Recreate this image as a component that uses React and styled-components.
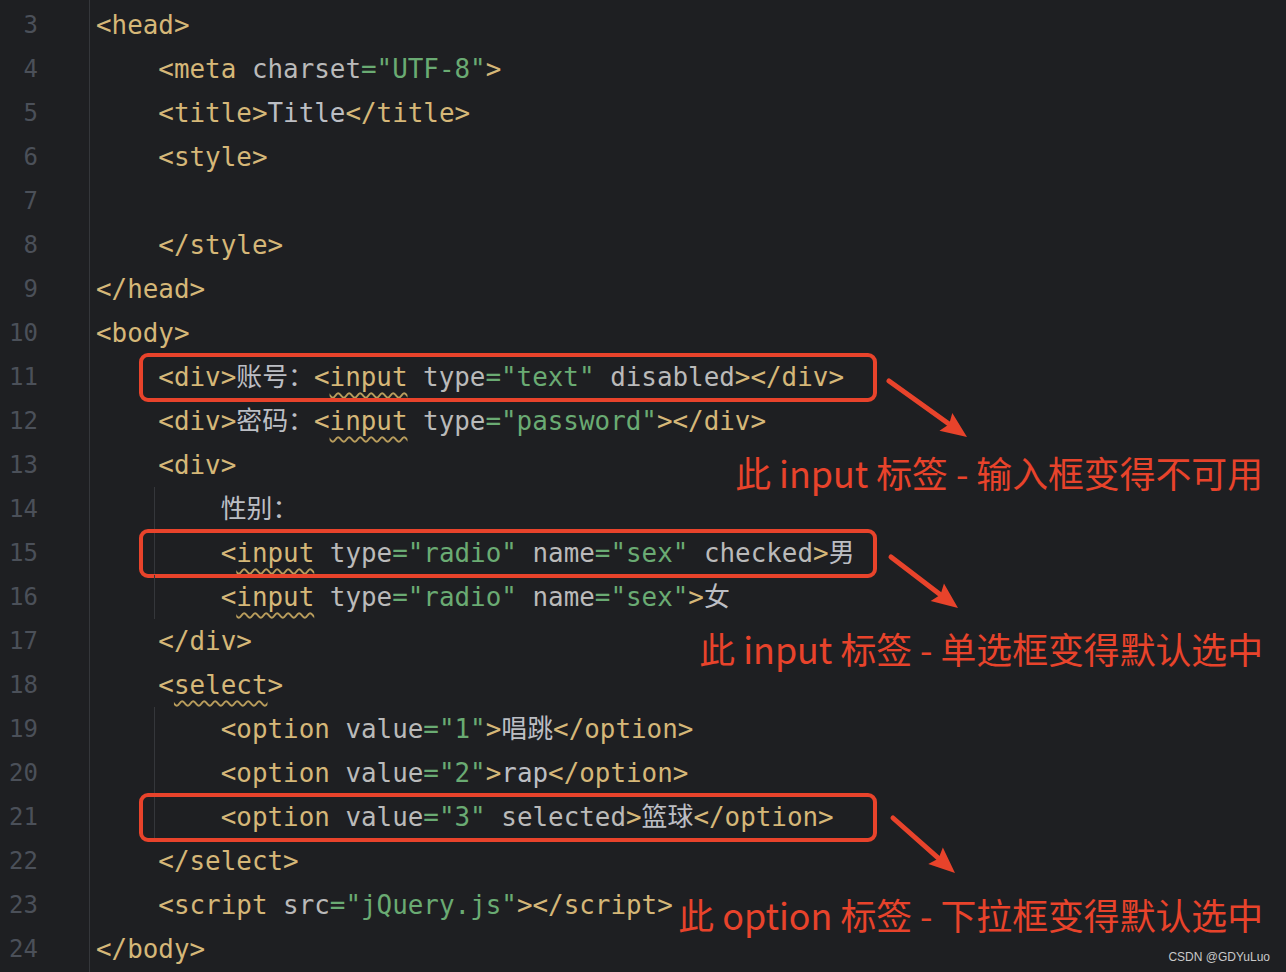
import React from "react";
import styled, { createGlobalStyle } from "styled-components";

const GlobalStyle = createGlobalStyle`
  html, body {
    margin: 0;
    padding: 0;
    background: #1e1f22;
    overflow: hidden;
  }
`;

const RED = "#e8432b";

const Editor = styled.div`
  position: relative;
  width: 1286px;
  height: 972px;
  display: flex;
  background: #1e1f22;
  overflow: hidden;
`;

const Gutter = styled.div`
  width: 90px;
  padding-top: 3px;
  border-right: 1px solid #35373b;
  box-sizing: border-box;
  display: flex;
  flex-direction: column;
`;

const LineNo = styled.div`
  height: 44px;
  line-height: 44px;
  text-align: right;
  padding-right: 51px;
  font-family: "DejaVu Sans Mono", monospace;
  font-size: 24px;
  color: #4b5059;
`;

const Code = styled.div`
  flex: 1;
  padding-top: 3px;
  display: flex;
  flex-direction: column;
`;

const Line = styled.div`
  position: relative;
  height: 44px;
  line-height: 44px;
  padding-left: 6px;
  white-space: pre;
  font-family: "DejaVu Sans Mono", "Noto Sans CJK SC", monospace;
  font-size: 25.9px;
  color: #bcbec4;

  &::before {
    content: "";
    display: ${(p) => (p.$guide ? "block" : "none")};
    position: absolute;
    left: 64px;
    top: 0;
    bottom: 0;
    width: 1px;
    background: #35373b;
  }

  &::after {
    content: "";
    display: ${(p) => (p.$marked ? "block" : "none")};
    position: absolute;
    left: 49px;
    width: 738px;
    top: -2px;
    bottom: -3px;
    border: 4px solid ${RED};
    border-radius: 9px;
    box-sizing: border-box;
  }
`;

const Tag = styled.span`
  color: #d5b778;
`;

const Wavy = styled.span`
  color: #d5b778;
  text-decoration: underline wavy #b99d5c;
  text-decoration-thickness: 1.5px;
  text-underline-offset: 6px;
`;

const Attr = styled.span`
  color: #bababa;
`;

const Str = styled.span`
  color: #6aab73;
`;

const Note = styled.div`
  position: absolute;
  right: 23px;
  top: ${(p) => p.$y - 25}px;
  height: 44px;
  line-height: 44px;
  font-family: "Noto Sans CJK SC", "Noto Sans", sans-serif;
  font-size: 35.85px;
  color: ${RED};
  white-space: pre;
`;

const ArrowSvg = styled.svg`
  position: absolute;
  left: 0;
  top: 0;
  pointer-events: none;
`;

const Watermark = styled.div`
  position: absolute;
  right: 16px;
  bottom: 8px;
  font-family: "Liberation Sans", Arial, sans-serif;
  font-size: 12px;
  color: #c9c9c9;
`;

function Arrow({ x1, y1, x2, y2 }) {
  const dx = x2 - x1;
  const dy = y2 - y1;
  const len = Math.hypot(dx, dy);
  const ux = dx / len;
  const uy = dy / len;
  const headLen = 26;
  const headW = 11;
  const bx = x2 - ux * headLen;
  const by = y2 - uy * headLen;
  const px = -uy;
  const py = ux;
  const pts = [
    [x2, y2],
    [bx + px * headW, by + py * headW],
    [bx + ux * 4, by + uy * 4],
    [bx - px * headW, by - py * headW],
  ]
    .map((p) => p.join(","))
    .join(" ");
  return (
    <g>
      <line
        x1={x1}
        y1={y1}
        x2={bx + ux * 6}
        y2={by + uy * 6}
        stroke={RED}
        strokeWidth="5"
        strokeLinecap="round"
      />
      <polygon points={pts} fill={RED} />
    </g>
  );
}

const lineNumbers = Array.from({ length: 22 }, (_, i) => i + 3);

export default function App() {
  return (
    <>
      <GlobalStyle />
      <Editor>
        <Gutter>
          {lineNumbers.map((n) => (
            <LineNo key={n}>{n}</LineNo>
          ))}
        </Gutter>
        <Code>
          <Line>
            <Tag>&lt;head&gt;</Tag>
          </Line>
          <Line>
            {"    "}
            <Tag>&lt;meta</Tag>
            <Attr> charset</Attr>
            <Str>="UTF-8"</Str>
            <Tag>&gt;</Tag>
          </Line>
          <Line>
            {"    "}
            <Tag>&lt;title&gt;</Tag>Title<Tag>&lt;/title&gt;</Tag>
          </Line>
          <Line>
            {"    "}
            <Tag>&lt;style&gt;</Tag>
          </Line>
          <Line> </Line>
          <Line>
            {"    "}
            <Tag>&lt;/style&gt;</Tag>
          </Line>
          <Line>
            <Tag>&lt;/head&gt;</Tag>
          </Line>
          <Line>
            <Tag>&lt;body&gt;</Tag>
          </Line>
          <Line $marked>
            {"    "}
            <Tag>&lt;div&gt;</Tag>账号：<Tag>&lt;</Tag>
            <Wavy>input</Wavy>
            <Attr> type</Attr>
            <Str>="text"</Str>
            <Attr> disabled</Attr>
            <Tag>&gt;&lt;/div&gt;</Tag>
          </Line>
          <Line>
            {"    "}
            <Tag>&lt;div&gt;</Tag>密码：<Tag>&lt;</Tag>
            <Wavy>input</Wavy>
            <Attr> type</Attr>
            <Str>="password"</Str>
            <Tag>&gt;&lt;/div&gt;</Tag>
          </Line>
          <Line>
            {"    "}
            <Tag>&lt;div&gt;</Tag>
          </Line>
          <Line $guide>{"        "}性别：</Line>
          <Line $guide $marked>
            {"        "}
            <Tag>&lt;</Tag>
            <Wavy>input</Wavy>
            <Attr> type</Attr>
            <Str>="radio"</Str>
            <Attr> name</Attr>
            <Str>="sex"</Str>
            <Attr> checked</Attr>
            <Tag>&gt;</Tag>男
          </Line>
          <Line $guide>
            {"        "}
            <Tag>&lt;</Tag>
            <Wavy>input</Wavy>
            <Attr> type</Attr>
            <Str>="radio"</Str>
            <Attr> name</Attr>
            <Str>="sex"</Str>
            <Tag>&gt;</Tag>女
          </Line>
          <Line>
            {"    "}
            <Tag>&lt;/div&gt;</Tag>
          </Line>
          <Line>
            {"    "}
            <Tag>&lt;</Tag>
            <Wavy>select</Wavy>
            <Tag>&gt;</Tag>
          </Line>
          <Line $guide>
            {"        "}
            <Tag>&lt;option</Tag>
            <Attr> value</Attr>
            <Str>="1"</Str>
            <Tag>&gt;</Tag>唱跳<Tag>&lt;/option&gt;</Tag>
          </Line>
          <Line $guide>
            {"        "}
            <Tag>&lt;option</Tag>
            <Attr> value</Attr>
            <Str>="2"</Str>
            <Tag>&gt;</Tag>rap<Tag>&lt;/option&gt;</Tag>
          </Line>
          <Line $guide $marked>
            {"        "}
            <Tag>&lt;option</Tag>
            <Attr> value</Attr>
            <Str>="3"</Str>
            <Attr> selected</Attr>
            <Tag>&gt;</Tag>篮球<Tag>&lt;/option&gt;</Tag>
          </Line>
          <Line>
            {"    "}
            <Tag>&lt;/select&gt;</Tag>
          </Line>
          <Line>
            {"    "}
            <Tag>&lt;script</Tag>
            <Attr> src</Attr>
            <Str>="jQuery.js"</Str>
            <Tag>&gt;&lt;/script&gt;</Tag>
          </Line>
          <Line>
            <Tag>&lt;/body&gt;</Tag>
          </Line>
        </Code>

        <ArrowSvg width="1286" height="972" viewBox="0 0 1286 972">
          <Arrow x1={889} y1={381} x2={967} y2={437} />
          <Arrow x1={891} y1={557} x2={958} y2={608} />
          <Arrow x1={893} y1={818} x2={955} y2={873} />
        </ArrowSvg>

        <Note $y={475}>此 input 标签 - 输入框变得不可用</Note>
        <Note $y={651}>此 input 标签 - 单选框变得默认选中</Note>
        <Note $y={917}>此 option 标签 - 下拉框变得默认选中</Note>

        <Watermark>CSDN @GDYuLuo</Watermark>
      </Editor>
    </>
  );
}
